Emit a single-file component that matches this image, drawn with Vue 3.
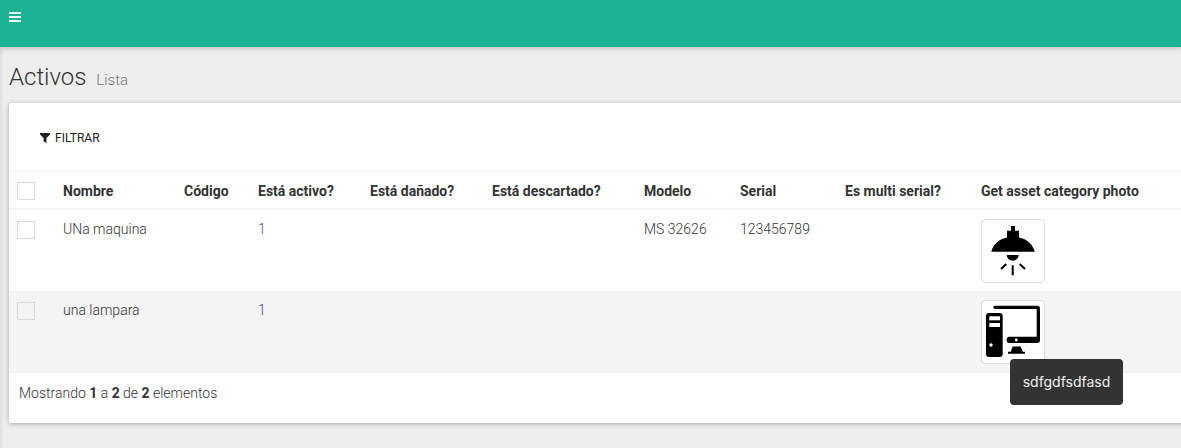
<script setup>
const columns = [
  { label: 'Nombre', width: 121 },
  { label: 'Código', width: 74 },
  { label: 'Está activo?', width: 112 },
  { label: 'Está dañado?', width: 122 },
  { label: 'Está descartado?', width: 152 },
  { label: 'Modelo', width: 96 },
  { label: 'Serial', width: 105 },
  { label: 'Es multi serial?', width: 136 },
  { label: 'Get asset category photo', width: 230 }
]
const rows = [
  { name: 'UNa maquina', active: '1', model: 'MS 32626', serial: '123456789', icon: 'lamp' },
  { name: 'una lampara', active: '1', model: '', serial: '', icon: 'pc' }
]
</script>

<template>
  <div class="page">
    <header class="topbar">
      <button class="menu" aria-label="Menu"><span></span><span></span><span></span></button>
    </header>
    <main class="content">
      <h1 class="title">Activos <small>Lista</small></h1>
      <section class="card">
        <div class="toolbar">
          <button class="filter">
            <svg width="10" height="10" viewBox="0 0 10 10"><path d="M0 0H10V1.4L6.4 5V10L3.6 8.400V5L0 1.4Z" fill="#222"/></svg>
            FILTRAR
          </button>
        </div>
        <table class="grid">
          <colgroup>
            <col class="check-col" />
            <col v-for="c in columns" :key="c.label" :style="{ width: c.width + 'px' }" />
          </colgroup>
          <thead>
            <tr>
              <th><span class="box"></span></th>
              <th v-for="c in columns" :key="c.label">{{ c.label }}</th>
            </tr>
          </thead>
          <tbody>
            <tr v-for="r in rows" :key="r.name">
              <td><span class="box"></span></td>
              <td class="text">{{ r.name }}</td>
              <td></td>
              <td class="text link">{{ r.active }}</td>
              <td></td>
              <td></td>
              <td class="text">{{ r.model }}</td>
              <td class="text">{{ r.serial }}</td>
              <td></td>
              <td>
                <div class="thumb">
                  <svg v-if="r.icon === 'lamp'" width="62" height="62" viewBox="0 0 62 62">
                    <path d="M29 6h4v4.700h4V17.500c8 1.500 14 7 15.700 14.200H9.300C11 24.500 17 19 25 17.500v-6.800h4z" fill="#000"/>
                    <path d="M24.700 35h12c-.3 3.500-2.800 5.700-6 5.700s-5.700-2.200-6-5.700z" fill="#000"/>
                    <path d="M30.700 45.300v10M19 49l5.300-5M43 49l-5.300-5" stroke="#000" stroke-width="2" fill="none"/>
                  </svg>
                  <svg v-else width="62" height="62" viewBox="0 0 62 62">
                    <path d="M13 4.700H55a3 3 0 0 1 3 3V39a3 3 0 0 1-3 3H27a2.500 2.500 0 0 1-2.300-2.500V38a2.500 2.500 0 0 1 2.300-2.300H54.700V8H13a1.650 1.650 0 0 1 0-3.300z" fill="#000"/>
                    <circle cx="34.300" cy="39" r="1.400" fill="#fff"/>
                    <path d="M30.700 45.400h8l2 5.300h2.300v2H26v-2h2.700z" fill="#000"/>
                    <rect x="4" y="12" width="16.700" height="44" rx="3" fill="#000"/>
                    <rect x="7.300" y="15.300" width="10.700" height="4" fill="#fff"/>
                    <rect x="7.300" y="22" width="10.700" height="4" fill="#fff"/>
                    <circle cx="9" cy="44" r="1.700" fill="#fff"/>
                  </svg>
                </div>
              </td>
            </tr>
          </tbody>
        </table>
        <p class="summary">Mostrando <b>1</b> a <b>2</b> de <b>2</b> elementos</p>
        <div class="tooltip">sdfgdfsdfasd</div>
      </section>
    </main>
  </div>
</template>

<style>
html, body { margin: 0; background: #eeeeee; overflow: hidden; }
</style>

<style scoped>
.page {
  width: 1181px;
  height: 448px;
  overflow: hidden;
  background: #eeeeee;
  box-shadow: inset 3px 0 3px -1px rgba(0, 0, 0, 0.07);
  font-family: Roboto, "Liberation Sans", sans-serif;
  color: #333;
}
.topbar {
  height: 47px;
  background: #1ab394;
  box-shadow: 0 1px 5px rgba(0, 0, 0, 0.25);
  position: relative;
  box-sizing: border-box;
  padding: 12px 9px 0;
}
.menu {
  display: flex;
  flex-direction: column;
  gap: 2px;
  width: 12px;
  padding: 0;
  border: 0;
  background: none;
}
.menu span { display: block; height: 2px; background: #fff; }
.content { padding: 15px 0 0 9px; }
.title {
  margin: 0 0 8px;
  font-weight: 300;
  font-size: 24px;
  line-height: 30px;
  color: #333;
}
.title small {
  font-size: 15px;
  font-weight: 300;
  color: #777;
  margin-left: 4px;
}
.card {
  position: relative;
  width: 1200px;
  height: 320px;
  background: #fff;
  border-radius: 2px;
  box-shadow: 0 1px 5px rgba(0, 0, 0, 0.3);
}
.toolbar { height: 68px; padding: 27px 0 0 31px; box-sizing: border-box; }
.filter {
  display: flex;
  align-items: center;
  gap: 5px;
  padding: 0;
  border: 0;
  background: none;
  font: 400 12px/16px Roboto, sans-serif;
  color: #222;
}
.grid {
  border-collapse: separate;
  border-spacing: 0;
  table-layout: fixed;
  width: 1194px;
  font-size: 14px;
}
.check-col { width: 46px; }
th {
  height: 39px;
  box-sizing: border-box;
  padding: 2px 8px 0;
  text-align: left;
  font-weight: 700;
  line-height: 20px;
  white-space: nowrap;
  border-top: 1px solid #f4f4f4;
  border-bottom: 2px solid #f4f4f4;
}
td {
  height: 81px;
  box-sizing: border-box;
  padding: 8px;
  vertical-align: top;
  font-weight: 300;
  line-height: 20px;
  color: #333;
}
td.text { padding-top: 9px; }
tbody tr:nth-child(2) td { height: 82px; }
th:first-child, td:first-child { padding: 0 0 0 8px; vertical-align: top; }
td:first-child { padding-top: 11px; }
th:first-child { padding-top: 10px; }
tbody tr:nth-child(2) { background: #f4f4f4; }
.link { color: #4a4a80; }
.box {
  display: block;
  width: 16px;
  height: 16px;
  border: 1px solid #d8d8d8;
  background: transparent;
}
.thumb {
  width: 62px;
  height: 62px;
  margin-top: 1px;
  border: 1px solid #ddd;
  border-radius: 4px;
  background: #fff;
}
.thumb svg { display: block; }
.summary {
  margin: 0;
  padding: 10px 10px;
  font-size: 14px;
  line-height: 20px;
  font-weight: 300;
}
.summary b { font-weight: 700; }
.tooltip {
  position: absolute;
  left: 1001px;
  top: 256px;
  width: 113px;
  height: 46px;
  box-sizing: border-box;
  background: #333;
  color: #f2f2f2;
  border-radius: 4px;
  font-family: Inter, Roboto, sans-serif;
  font-size: 14px;
  line-height: 46px;
  text-align: center;
  font-weight: 400;
}
</style>
